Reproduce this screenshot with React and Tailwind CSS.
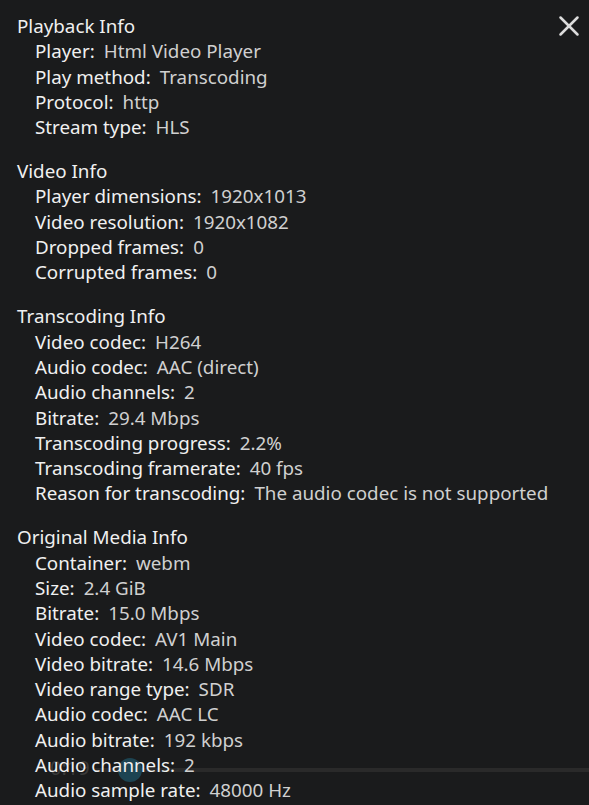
import { X } from "lucide-react";

const sections = [
  {
    title: "Playback Info",
    rows: [
      ["Player", "Html Video Player"],
      ["Play method", "Transcoding"],
      ["Protocol", "http"],
      ["Stream type", "HLS"],
    ],
  },
  {
    title: "Video Info",
    rows: [
      ["Player dimensions", "1920x1013"],
      ["Video resolution", "1920x1082"],
      ["Dropped frames", "0"],
      ["Corrupted frames", "0"],
    ],
  },
  {
    title: "Transcoding Info",
    rows: [
      ["Video codec", "H264"],
      ["Audio codec", "AAC (direct)"],
      ["Audio channels", "2"],
      ["Bitrate", "29.4 Mbps"],
      ["Transcoding progress", "2.2%"],
      ["Transcoding framerate", "40 fps"],
      ["Reason for transcoding", "The audio codec is not supported"],
    ],
  },
  {
    title: "Original Media Info",
    rows: [
      ["Container", "webm"],
      ["Size", "2.4 GiB"],
      ["Bitrate", "15.0 Mbps"],
      ["Video codec", "AV1 Main"],
      ["Video bitrate", "14.6 Mbps"],
      ["Video range type", "SDR"],
      ["Audio codec", "AAC LC"],
      ["Audio bitrate", "192 kbps"],
      ["Audio channels", "2"],
      ["Audio sample rate", "48000 Hz"],
    ],
  },
];

function App() {
  return (
    <div className="relative h-[805px] w-[589px] overflow-hidden bg-[#1a1b1c] font-['Noto_Sans',sans-serif] text-[18.8px] leading-[25.3px]">
      {/* video osd showing through behind the info panel */}
      <div className="absolute left-[95px] right-0 top-[768px] h-[4px] bg-[#2a2a2a]"></div>
      <div className="absolute left-[118px] top-[758px] h-[24px] w-[24px] rounded-full bg-[#1d4452]"></div>
      <span className="absolute left-[50px] top-[755px] text-[20px] text-[#3a3a3a]">0:19</span>

      <button className="absolute right-[3px] top-[9px] text-[#dcdcdc]">
        <X size={34} strokeWidth={1.8} />
      </button>

      <div className="relative flex flex-col gap-[18.7px] pl-[17px] pt-[14px]">
        {sections.map((s) => (
          <div key={s.title} className="flex flex-col">
            <div className="text-[#f0f0f0]">{s.title}</div>
            {s.rows.map(([label, value]) => (
              <div key={label} className="flex pl-[18px] whitespace-nowrap">
                <span className="text-[#f0f0f0]">{label}:</span>
                <span className="ml-[9px] text-[#d0d0d0]">{value}</span>
              </div>
            ))}
          </div>
        ))}
      </div>
    </div>
  );
}

export default App;
